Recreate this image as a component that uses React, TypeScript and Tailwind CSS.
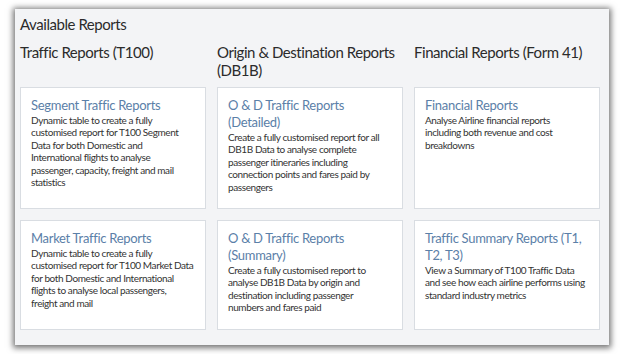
import React from "react";

const columns = [
  {
    heading: ["Traffic Reports (T100)"],
    cards: [
      {
        title: ["Segment Traffic Reports"],
        body: [
          "Dynamic table to create a fully",
          "customised report for T100 Segment",
          "Data for both Domestic and",
          "International flights to analyse",
          "passenger, capacity, freight and mail",
          "statistics",
        ],
      },
      {
        title: ["Market Traffic Reports"],
        body: [
          "Dynamic table to create a fully",
          "customised report for T100 Market Data",
          "for both Domestic and International",
          "flights to analyse local passengers,",
          "freight and mail",
        ],
      },
    ],
  },
  {
    heading: ["Origin & Destination Reports", "(DB1B)"],
    cards: [
      {
        title: ["O & D Traffic Reports", "(Detailed)"],
        body: [
          "Create a fully customised report for all",
          "DB1B Data to analyse complete",
          "passenger itineraries including",
          "connection points and fares paid by",
          "passengers",
        ],
      },
      {
        title: ["O & D Traffic Reports", "(Summary)"],
        body: [
          "Create a fully customised report to",
          "analyse DB1B Data by origin and",
          "destination including passenger",
          "numbers and fares paid",
        ],
      },
    ],
  },
  {
    heading: ["Financial Reports (Form 41)"],
    cards: [
      {
        title: ["Financial Reports"],
        body: [
          "Analyse Airline financial reports",
          "including both revenue and cost",
          "breakdowns",
        ],
      },
      {
        title: ["Traffic Summary Reports (T1,", "T2, T3)"],
        body: [
          "View a Summary of T100 Traffic Data",
          "and see how each airline performs using",
          "standard industry metrics",
        ],
      },
    ],
  },
];

export default function App() {
  return (
    <div className="w-[621px] h-[354px] bg-white pt-[9px] pl-[15px] font-['Lato',sans-serif]">
      <div className="w-[594px] h-[336px] bg-[#f3f4f6] pl-[5px] pr-[9px] pt-[4px] shadow-[0_1px_6px_2px_rgba(0,0,0,0.55)]">
        {/* Title */}
        <h1 className="text-[15px] leading-[22px] tracking-[-0.45px] text-[#2b2b2b]">Available Reports</h1>

        {/* Columns */}
        <div className="grid grid-cols-[186px_186px_186px] gap-x-[11px] mt-[8px]">
          {columns.map((col, idx) => (
            <div key={idx} className="flex flex-col">
              <h2 className="text-[15px] leading-[18px] tracking-[-0.45px] text-[#2b2b2b] h-[36px] mb-[8px]">
                {col.heading.map((line, j) => (
                  <span key={j} className="block whitespace-nowrap">{line}</span>
                ))}
              </h2>
              <div className="flex flex-col gap-[11px]">
                {col.cards.map((card, i) => (
                  <div
                    key={i}
                    className={`bg-white border border-[#d9dde2] px-[10px] pt-[9px] ${
                      i === 0 ? "h-[122px]" : "h-[110px]"
                    }`}
                  >
                    <h3 className="text-[13px] leading-[17px] tracking-[-0.3px] text-[#5b80a8]">
                      {card.title.map((line, j) => (
                        <span key={j} className="block whitespace-nowrap">{line}</span>
                      ))}
                    </h3>
                    <p className="text-[10px] leading-[12.4px] tracking-[-0.4px] text-[#333]">
                      {card.body.map((line, j) => (
                        <span key={j} className="block whitespace-nowrap">{line}</span>
                      ))}
                    </p>
                  </div>
                ))}
              </div>
            </div>
          ))}
        </div>
      </div>
    </div>
  );
}
